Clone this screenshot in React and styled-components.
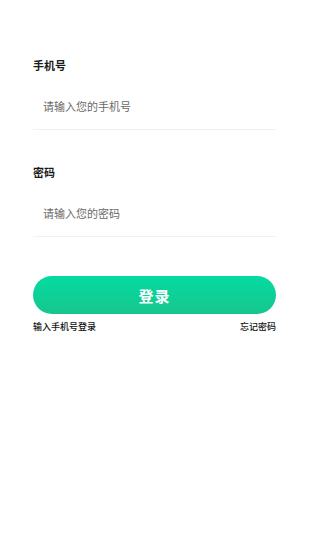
import React from 'react'
import styled, { createGlobalStyle } from 'styled-components'

const GlobalStyle = createGlobalStyle`
  body {
    margin: 0;
    background: #ffffff;
    font-family: "Noto Sans CJK SC", "Noto Sans", sans-serif;
  }
`

const Page = styled.div`
  padding: 58px 33px 0;
  box-sizing: border-box;
  width: 309px;
  min-height: 550px;
  background: #ffffff;
`

const Field = styled.div`
  margin-top: ${({ first }) => (first ? '0' : '35px')};
`

const Label = styled.label`
  display: block;
  font-size: 11px;
  line-height: 14px;
  font-weight: 700;
  color: #1a1a1a;
`

const Input = styled.input`
  display: block;
  box-sizing: border-box;
  width: 100%;
  height: 47px;
  margin-top: 11px;
  padding: 0 0 0 10px;
  border: none;
  border-bottom: 1px solid #f1f1f1;
  outline: none;
  background: transparent;
  font-family: inherit;
  font-size: 11px;
  color: #333;

  &::placeholder {
    color: #6a6a6a;
  }
`

const Button = styled.button`
  display: block;
  width: 100%;
  height: 38px;
  margin-top: 39px;
  border: none;
  border-radius: 19px;
  background: linear-gradient(180deg, #04dba1 0%, #17c68d 100%);
  color: #ffffff;
  font-family: inherit;
  font-size: 15px;
  font-weight: 700;
  letter-spacing: 1px;
  cursor: pointer;
`

const Links = styled.div`
  display: flex;
  justify-content: space-between;
  margin-top: 7px;
`

const Link = styled.a`
  font-size: 9px;
  line-height: 12px;
  font-weight: 500;
  color: #111;
  text-decoration: none;
`

export default function App() {
  return (
    <>
      <GlobalStyle />
      <Page>
        <Field first>
          <Label>手机号</Label>
          <Input type="tel" placeholder="请输入您的手机号" />
        </Field>
        <Field>
          <Label>密码</Label>
          <Input type="password" placeholder="请输入您的密码" />
        </Field>
        <Button type="button">登录</Button>
        <Links>
          <Link href="#">输入手机号登录</Link>
          <Link href="#">忘记密码</Link>
        </Links>
      </Page>
    </>
  )
}
